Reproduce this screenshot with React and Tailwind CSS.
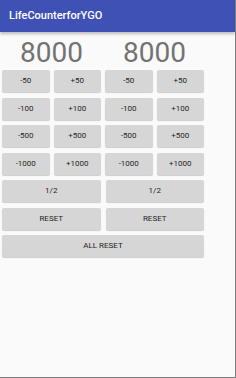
import React from 'react';

const font = { fontFamily: 'Roboto, "Noto Sans", sans-serif' };

function Btn({ children }) {
  return (
    <button className="h-[22px] w-full rounded-[2px] bg-[#d6d6d6] text-[8px] leading-none text-[#1f1f1f] shadow-[0_1px_1px_rgba(0,0,0,0.18)]">
      {children}
    </button>
  );
}

const steps = [50, 100, 500, 1000];

export default function App() {
  return (
    <div
      className="flex h-[378px] w-[236px] flex-col overflow-hidden border-r border-b border-[#7a7a7a] bg-[#fafafa]"
      style={font}
    >
      <div className="relative z-10 flex h-[32px] shrink-0 items-center bg-[#3f51b5] px-[9px] shadow-[0_2px_3px_rgba(0,0,0,0.25)]">
        <span className="text-[11px] font-medium text-white">LifeCounterforYGO</span>
      </div>

      <div className="w-[206px]">
        <div className="mt-[7px] grid h-[28px] grid-cols-2">
          <div className="text-center text-[28px] leading-[28px] text-[#737373]">8000</div>
          <div className="text-center text-[28px] leading-[28px] text-[#737373]">8000</div>
        </div>

        <div className="mt-[3px] flex flex-col gap-[5.5px] px-[2px]">
          {steps.map((s) => (
            <div key={s} className="grid grid-cols-4 gap-x-[4px]">
              <Btn>-{s}</Btn>
              <Btn>+{s}</Btn>
              <Btn>-{s}</Btn>
              <Btn>+{s}</Btn>
            </div>
          ))}
          <div className="grid grid-cols-2 gap-x-[5px]">
            <Btn>1/2</Btn>
            <Btn>1/2</Btn>
          </div>
          <div className="grid grid-cols-2 gap-x-[5px]">
            <Btn>RESET</Btn>
            <Btn>RESET</Btn>
          </div>
          <Btn>ALL RESET</Btn>
        </div>
      </div>
    </div>
  );
}
